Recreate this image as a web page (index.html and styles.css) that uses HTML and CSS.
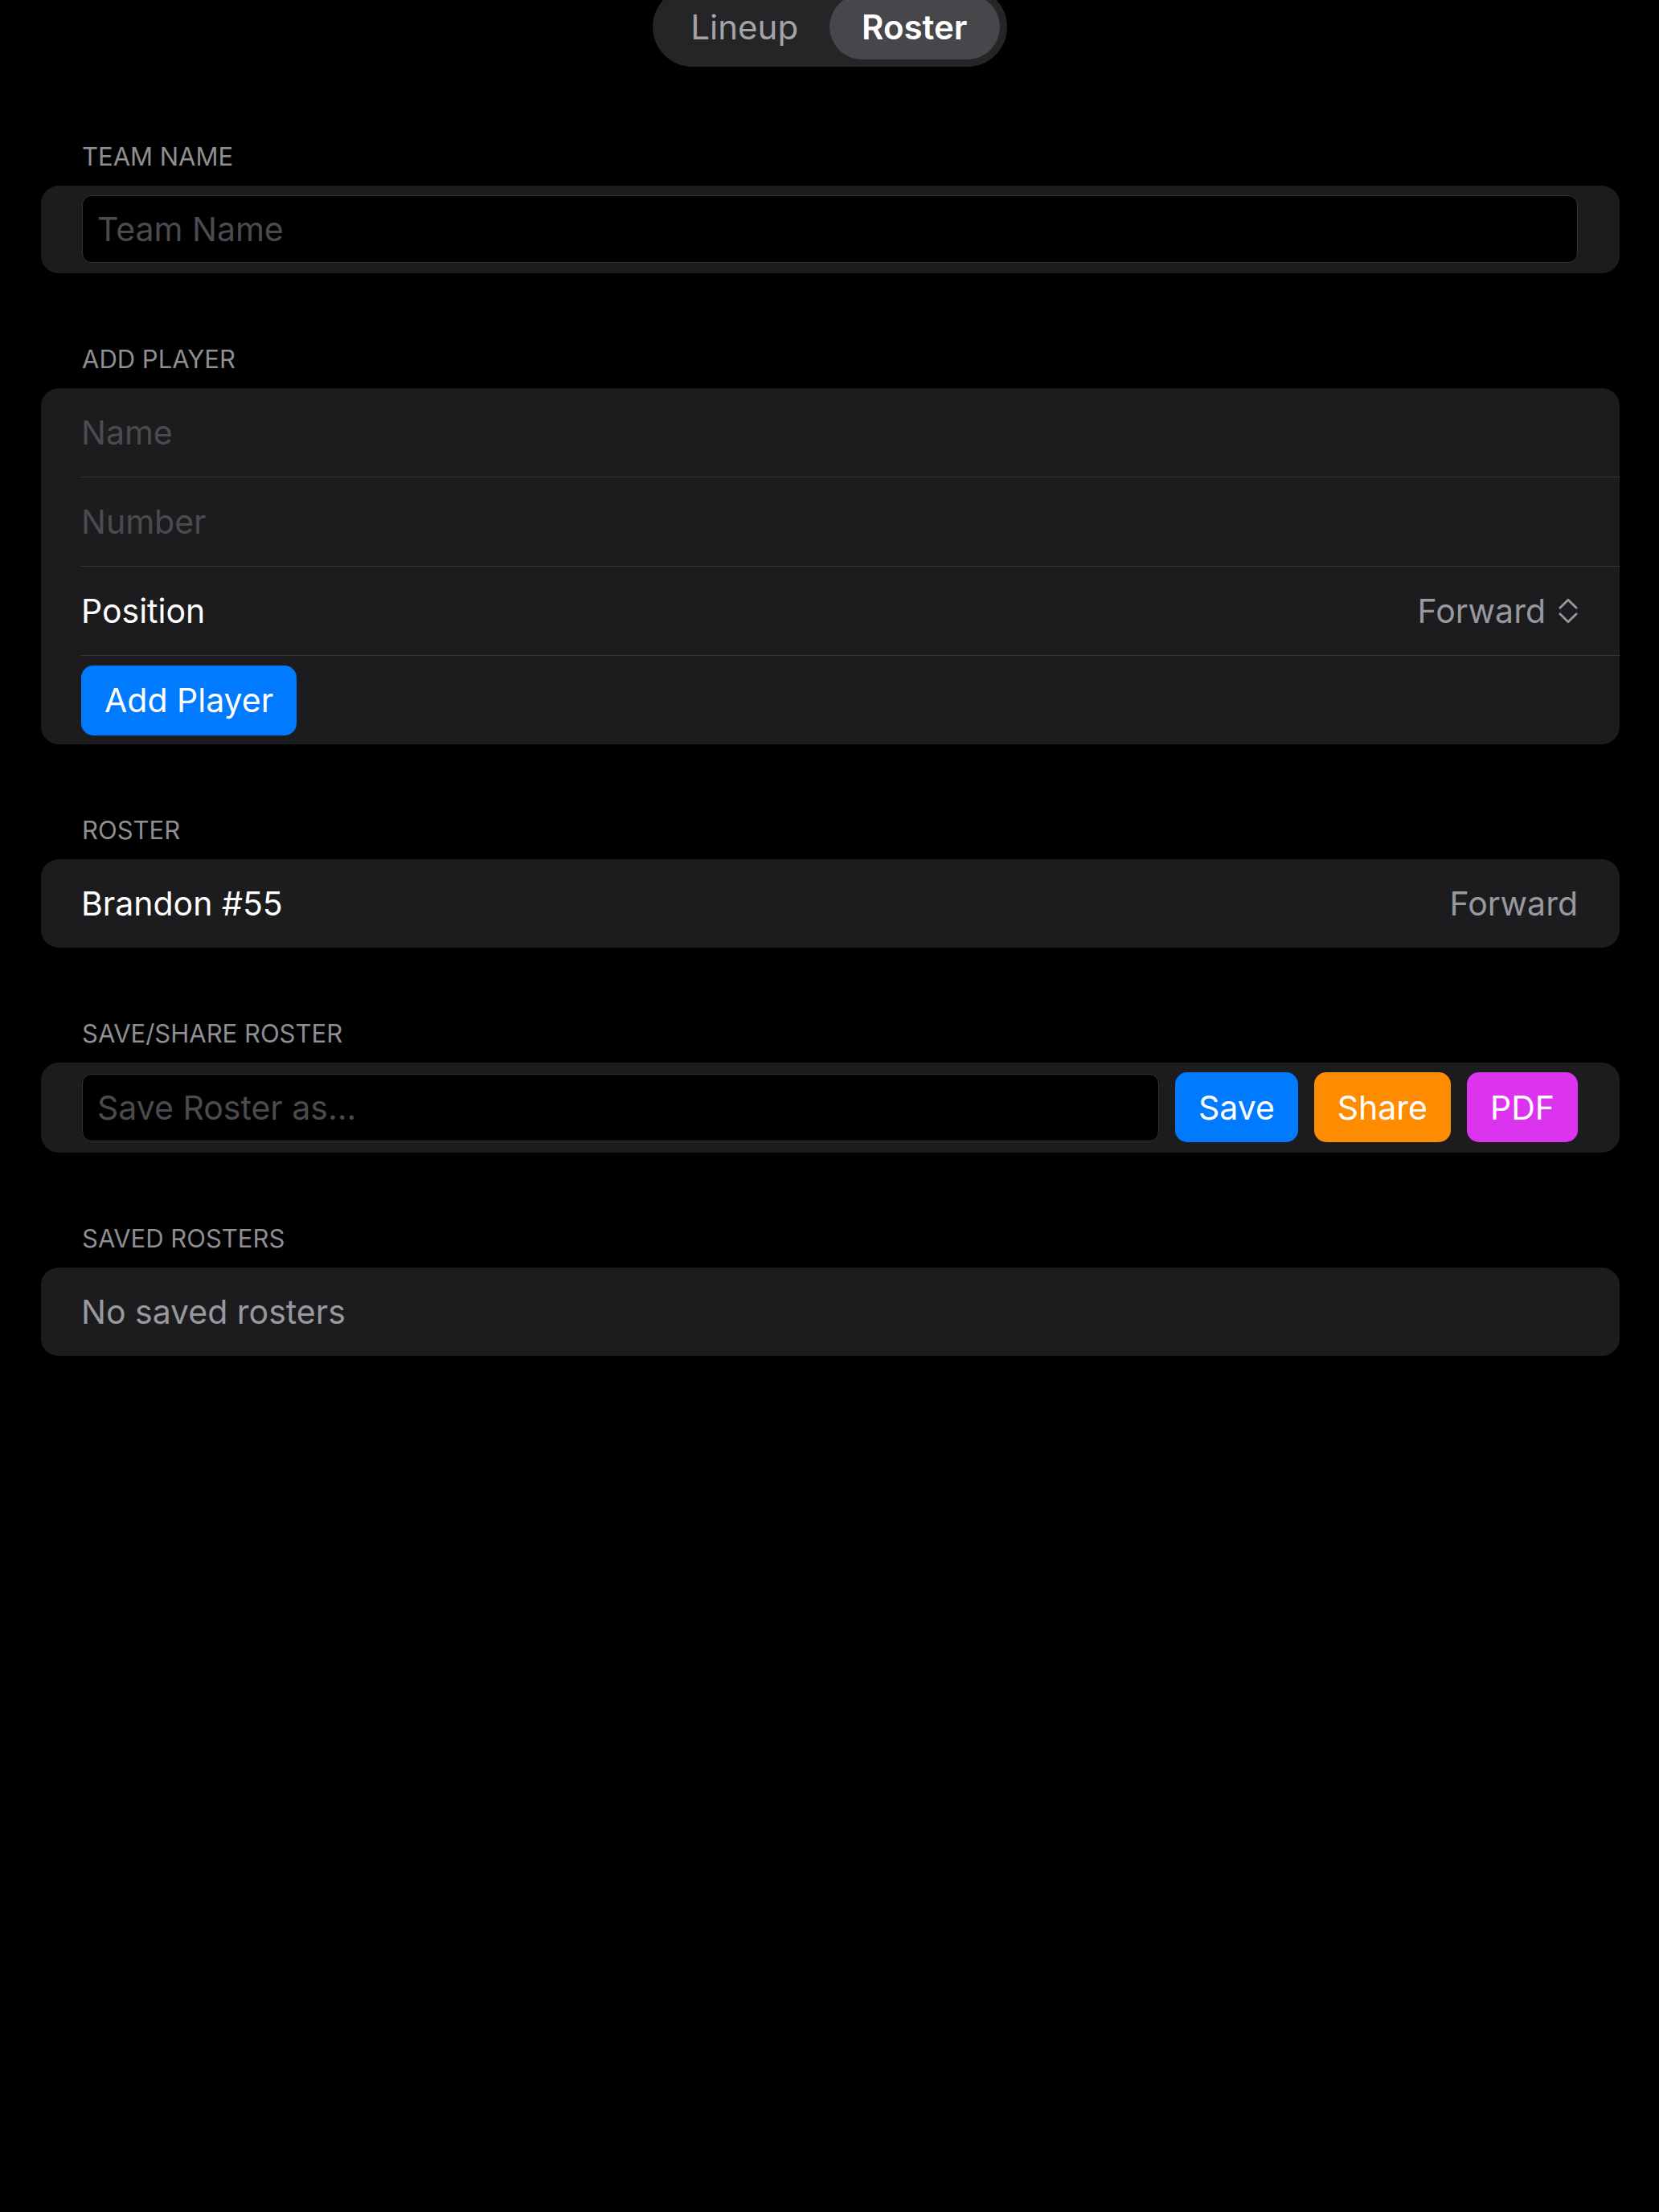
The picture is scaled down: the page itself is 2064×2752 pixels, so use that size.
FILE: index.html
```html
<!DOCTYPE html>
<html lang="en">
<head>
  <meta charset="UTF-8" />
  <meta name="viewport" content="width=device-width, initial-scale=1.0"/>
  <title>Roster</title>
  <link rel="stylesheet" href="styles.css">
</head>
<body>

  <!-- Lineup / Roster switcher -->
  <div class="toolbar">
    <div class="segmented">
      <button class="segment">Lineup</button>
      <button class="segment active">Roster</button>
    </div>
  </div>

  <div class="form">

    <section class="section">
      <h2 class="section-header">Team Name</h2>
      <div class="card card-field">
        <input type="text" class="field" placeholder="Team Name" />
      </div>
    </section>

    <section class="section">
      <h2 class="section-header">Add Player</h2>
      <div class="card">
        <div class="row">
          <input type="text" class="row-input" placeholder="Name" />
        </div>
        <div class="row">
          <input type="text" class="row-input" placeholder="Number" />
        </div>
        <div class="row">
          <span class="row-label">Position</span>
          <span class="picker">
            Forward
            <svg class="chevrons" width="26" height="34" viewBox="0 0 26 34">
              <path d="M2 13 L13 2 L24 13" />
              <path d="M2 21 L13 32 L24 21" />
            </svg>
          </span>
        </div>
        <div class="row">
          <button class="btn blue">Add Player</button>
        </div>
      </div>
    </section>

    <section class="section">
      <h2 class="section-header">Roster</h2>
      <div class="card">
        <div class="row">
          <span class="row-label">Brandon #55</span>
          <span class="row-detail">Forward</span>
        </div>
      </div>
    </section>

    <section class="section">
      <h2 class="section-header">Save/Share Roster</h2>
      <div class="card card-field save-bar">
        <input type="text" class="field" placeholder="Save Roster as..." />
        <button class="btn blue">Save</button>
        <button class="btn orange">Share</button>
        <button class="btn magenta">PDF</button>
      </div>
    </section>

    <section class="section">
      <h2 class="section-header">Saved Rosters</h2>
      <div class="card">
        <div class="row">
          <span class="row-empty">No saved rosters</span>
        </div>
      </div>
    </section>

  </div>

</body>
</html>
```

FILE: styles.css
```css
body {
  background: #000;
  color: #fff;
  font-family: "Inter", "Roboto", sans-serif;
  font-size: 41px;
  margin: 0;
}

button,
input {
  font-family: inherit;
  font-size: inherit;
}

/* segmented control at the top */
.toolbar {
  display: flex;
  justify-content: center;
  margin-top: -16px;
}

.segmented {
  display: grid;
  grid-template-columns: 1fr 1fr;
  width: 441px;
  height: 99px;
  padding: 9px;
  box-sizing: border-box;
  background: #252527;
  border-radius: 50px;
}

.segment {
  border: none;
  background: transparent;
  color: #a3a3a8;
  border-radius: 41px;
  font-size: 42px;
  cursor: pointer;
}

.segment.active {
  background: #47474b;
  color: #fff;
  font-weight: 600;
}

/* grouped form */
.form {
  padding: 94px 49px 0 51px;
}

.section + .section {
  margin-top: 89px;
}

.section-header {
  margin: 0 0 18px 51px;
  font-size: 31px;
  font-weight: 400;
  line-height: 36px;
  color: #8e8e93;
  text-transform: uppercase;
}

.card {
  background: #1c1c1e;
  border-radius: 22px;
  overflow: hidden;
}

.card-field {
  display: flex;
  align-items: center;
  padding: 12px 52px 13px 51px;
}

.field {
  flex: 1;
  height: 84px;
  box-sizing: border-box;
  padding: 0 18px;
  background: #000;
  color: #fff;
  border: 1.5px solid #323234;
  border-radius: 12px;
  outline: none;
}

.field::placeholder,
.row-input::placeholder {
  color: #4b4b4f;
}

.row {
  display: flex;
  align-items: center;
  justify-content: space-between;
  min-height: 110px;
  margin-left: 50px;
  padding-right: 52px;
}

.row + .row {
  border-top: 1px solid #38383a;
}

.row-input {
  flex: 1;
  padding: 0;
  border: none;
  background: transparent;
  color: #fff;
  outline: none;
}

.row-detail,
.picker,
.row-empty {
  color: #98989e;
}

.picker {
  display: flex;
  align-items: center;
  gap: 16px;
}

.chevrons {
  width: 24px;
  height: 32px;
  fill: none;
  stroke: #98989e;
  stroke-width: 3;
  stroke-linecap: round;
  stroke-linejoin: round;
}

.btn {
  height: 87px;
  padding: 0 29px;
  border: none;
  border-radius: 15px;
  color: #fff;
  cursor: pointer;
}

.blue {
  background: #007aff;
}

.orange {
  background: #ff8c00;
}

.magenta {
  background: #db33ee;
}

.save-bar {
  gap: 20px;
}
```
